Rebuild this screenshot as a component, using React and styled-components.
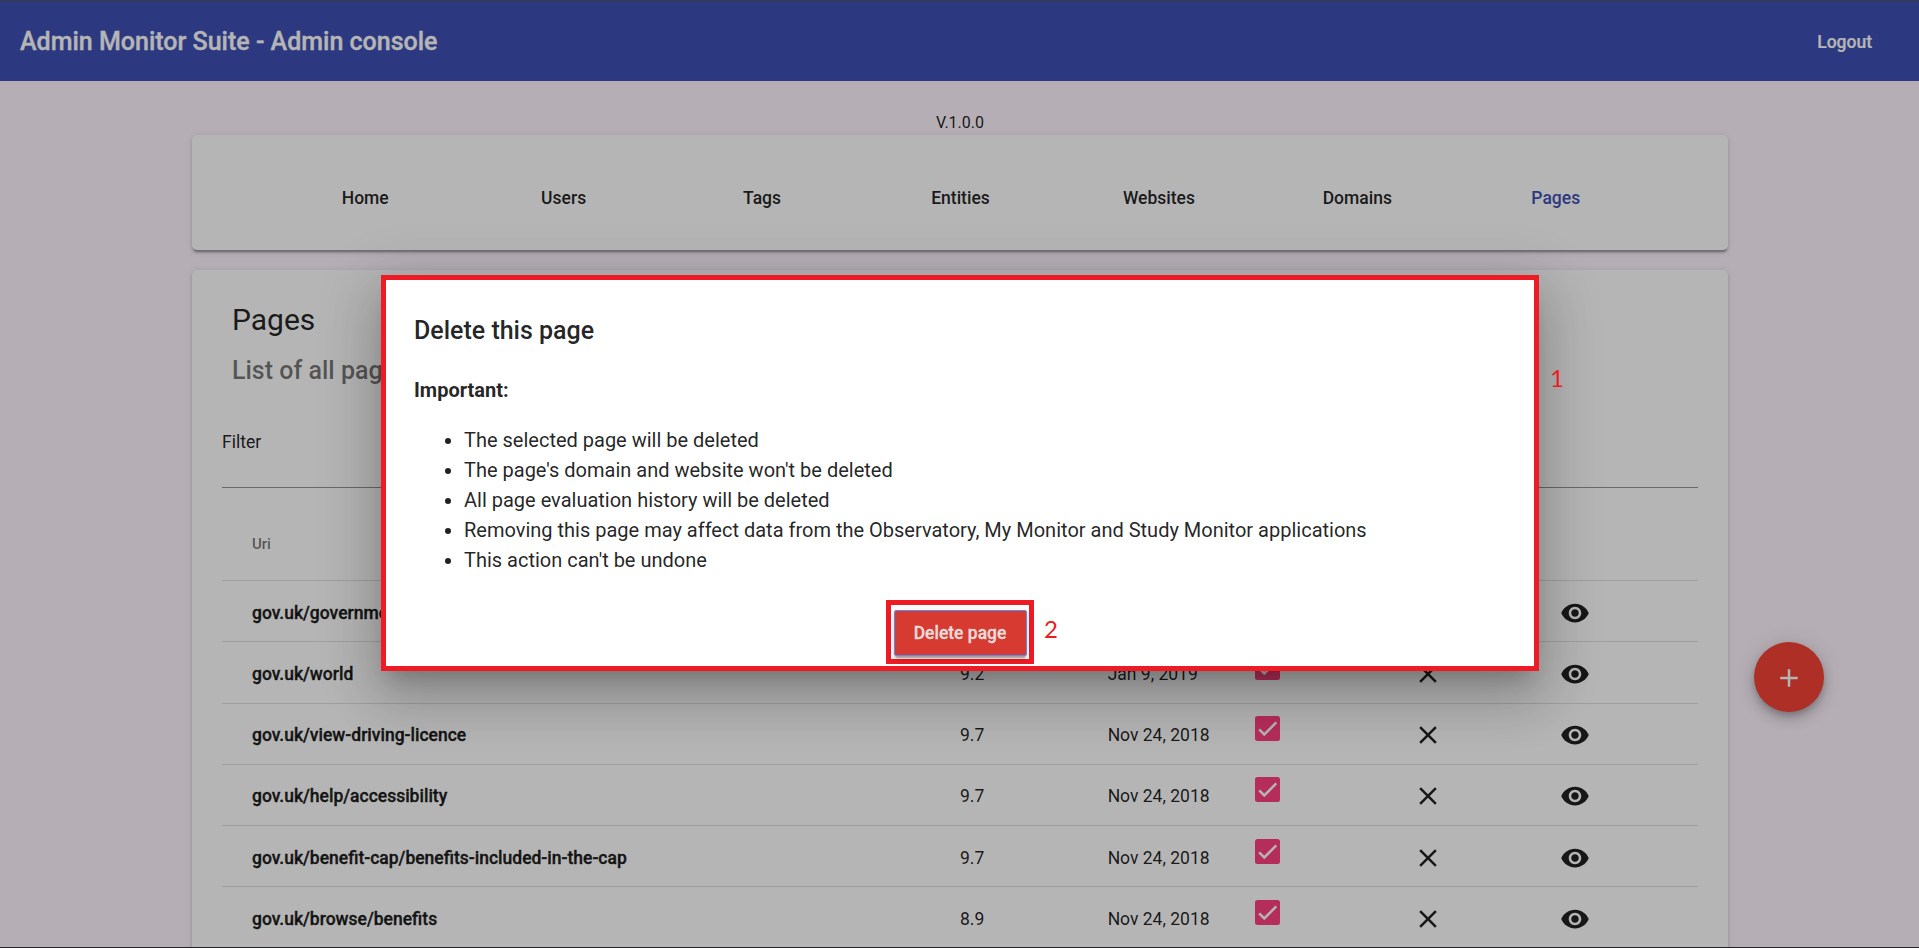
import React from "react";
import styled, { createGlobalStyle } from "styled-components";

const GlobalStyle = createGlobalStyle`
  * { box-sizing: border-box; }
  html, body { margin: 0; height: 948px; overflow: hidden; }
  body { font-family: Roboto, "Liberation Sans", sans-serif; color: rgba(0, 0, 0, 0.87); }
`;

const Screen = styled.div`
  position: relative;
  width: 1919px;
  height: 948px;
  overflow: hidden;
  background: #fff5ff;
`;

const TopBar = styled.header`
  display: flex;
  align-items: center;
  justify-content: space-between;
  height: 81px;
  padding: 3px 47px 0 20px;
  background: #3f51b5;
  color: #fff;
`;

const Brand = styled.h1`
  margin: 0;
  font-size: 25px;
  font-weight: 500;
  line-height: 40px;
  -webkit-text-stroke: 0.3px currentColor;
`;

const Logout = styled.a`
  font-size: 17.5px;
  font-weight: 500;
  -webkit-text-stroke: 0.2px currentColor;
`;

const Content = styled.main`
  width: 1536px;
  margin-left: 192px;
`;

const Version = styled.div`
  height: 54px;
  padding-top: 32px;
  text-align: center;
  font-size: 16px;
  line-height: 20px;
`;

const Card = styled.section`
  border-radius: 5px;
  background: #fff;
  box-shadow: 0 3.75px 1.25px -2.5px rgba(0, 0, 0, 0.2),
    0 2.5px 2.5px 0 rgba(0, 0, 0, 0.14), 0 1.25px 6.25px 0 rgba(0, 0, 0, 0.12);
`;

const NavCard = styled(Card)`
  height: 115px;
  margin-bottom: 20px;
  padding: 10px 73px 0 74px;
  display: flex;
  align-items: center;
`;

const NavLink = styled.a`
  flex: 1;
  text-align: center;
  font-size: 17.5px;
  font-weight: 500;
  color: ${(p) => (p.$active ? "#3f51b5" : "rgba(0, 0, 0, 0.87)")};
`;

const PagesCard = styled(Card)`
  height: 720px;
  padding: 30px;
`;

const CardTitle = styled.h2`
  margin: 0;
  padding-left: 10px;
  font-size: 30px;
  font-weight: 400;
  line-height: 40px;
`;

const CardSubtitle = styled.h3`
  margin: 11px 0 0;
  padding-left: 10px;
  font-size: 25px;
  font-weight: 500;
  line-height: 40px;
  color: rgba(0, 0, 0, 0.54);
`;

const FilterField = styled.div`
  height: 97px;
  padding-top: 41px;
  border-bottom: 1px solid rgba(0, 0, 0, 0.42);
  font-size: 17.5px;
  line-height: 20px;
`;

const Row = styled.div`
  display: grid;
  grid-template-columns: 1fr repeat(5, 147.6px);
  align-items: center;
  height: 61.2px;
  padding-left: 30px;
  border-bottom: 1px solid rgba(0, 0, 0, 0.12);
  font-size: 17.5px;
`;

const HeadRow = styled(Row)`
  height: 93.2px;
  padding-top: 20px;
  font-size: 15px;
  font-weight: 500;
  color: rgba(0, 0, 0, 0.54);
`;

const Cell = styled.span`
  padding-top: 3px;
`;

const Uri = styled(Cell)`
  font-weight: 500;
  -webkit-text-stroke: 0.4px currentColor;
`;

const Checkbox = styled.span`
  display: flex;
  width: 25px;
  height: 25px;
  margin-bottom: 10px;
  border-radius: 2.5px;
  background: #ff4081;
`;

const IconCell = styled.span`
  display: flex;
  justify-content: center;
  width: 50px;
  padding-top: 3px;
`;

const Fab = styled.button`
  position: absolute;
  left: 1754px;
  top: 642px;
  display: flex;
  align-items: center;
  justify-content: center;
  width: 70px;
  height: 70px;
  padding: 2px 0 0;
  border: 0;
  border-radius: 50%;
  background: #f44336;
  color: #fff;
  box-shadow: 0 3.75px 6.25px -1.25px rgba(0, 0, 0, 0.2),
    0 7.5px 12.5px 0 rgba(0, 0, 0, 0.14), 0 1.25px 22.5px 0 rgba(0, 0, 0, 0.12);
`;

const Backdrop = styled.div`
  position: absolute;
  inset: 0;
  background: rgba(0, 0, 0, 0.29);
`;

const Dialog = styled.div`
  position: absolute;
  left: 381px;
  top: 275px;
  width: 1158px;
  height: 396px;
  padding: 31px 28px 0;
  border: 5px solid #ee1b24;
  background: #fff;
  box-shadow: 0 13.75px 18.75px -8.75px rgba(0, 0, 0, 0.2),
    0 30px 47.5px 3.75px rgba(0, 0, 0, 0.14), 0 11.25px 57.5px 10px rgba(0, 0, 0, 0.12);
`;

const DialogTitle = styled.h2`
  margin: 0 0 24px;
  font-size: 25px;
  font-weight: 500;
  line-height: 40px;
`;

const DialogBody = styled.div`
  font-size: 20px;
  line-height: 30px;
`;

const Notes = styled.ul`
  margin: 20px 0 25px;
  padding-left: 50px;
`;

const Actions = styled.div`
  display: flex;
  justify-content: center;
`;

const Highlight = styled.div`
  display: flex;
  justify-content: center;
  width: 148px;
  height: 64px;
  padding-top: 5px;
  border: 5px solid #ee1b24;
`;

const DeleteButton = styled.button`
  width: 133px;
  height: 46px;
  padding: 0;
  border: 0;
  border-radius: 3px;
  background: #d63a30;
  color: rgba(235, 228, 228, 0.95);
  font: 500 17.5px Roboto, "Liberation Sans", sans-serif;
  -webkit-text-stroke: 0.3px currentColor;
  outline: 1px solid #5b8def;
  outline-offset: -1px;
  box-shadow: 0 3.75px 1.25px -2.5px rgba(0, 0, 0, 0.2),
    0 2.5px 2.5px 0 rgba(0, 0, 0, 0.14), 0 1.25px 6.25px 0 rgba(0, 0, 0, 0.12);
`;

const StepLabel = styled.span`
  position: absolute;
  left: ${(p) => p.$x}px;
  top: ${(p) => p.$y}px;
  font-family: Lato, sans-serif;
  font-size: 24px;
  line-height: 30px;
  color: #ee1b24;
`;

const ScreenEdge = styled.div`
  position: absolute;
  left: 0;
  right: 0;
  height: 1px;
  ${(p) => p.$side}: 0;
  background: ${(p) => (p.$side === "top" ? "#3a3a3b" : "#242526")};
`;

const ICONS = {
  close:
    "M19 6.41L17.59 5 12 10.59 6.41 5 5 6.41 10.59 12 5 17.59 6.41 19 12 13.41 17.59 19 19 17.59 13.41 12z",
  eye: "M12 4.5C7 4.5 2.73 7.61 1 12c1.73 4.39 6 7.5 11 7.5s9.27-3.11 11-7.5c-1.73-4.39-6-7.5-11-7.5zM12 17c-2.76 0-5-2.24-5-5s2.24-5 5-5 5 2.24 5 5-2.24 5-5 5zm0-8c-1.66 0-3 1.34-3 3s1.34 3 3 3 3-1.34 3-3-1.34-3-3-3z",
  add: "M19 13h-6v6h-2v-6H5v-2h6V5h2v6h6v2z",
};

const Icon = ({ name }) => (
  <svg width="30" height="30" viewBox="0 0 24 24" fill="currentColor">
    <path d={ICONS[name]} />
  </svg>
);

const CheckMark = () => (
  <svg width="25" height="25" viewBox="0 0 24 24" fill="none" stroke="#fff" strokeWidth="2.4">
    <path d="M4,12.9 8.9,17.7 20.4,6.2" />
  </svg>
);

const NAV = ["Home", "Users", "Tags", "Entities", "Websites", "Domains", "Pages"];

const PAGES = [
  ["gov.uk/government", "9.2", "Jan 9, 2019"],
  ["gov.uk/world", "9.2", "Jan 9, 2019"],
  ["gov.uk/view-driving-licence", "9.7", "Nov 24, 2018"],
  ["gov.uk/help/accessibility", "9.7", "Nov 24, 2018"],
  ["gov.uk/benefit-cap/benefits-included-in-the-cap", "9.7", "Nov 24, 2018"],
  ["gov.uk/browse/benefits", "8.9", "Nov 24, 2018"],
];

const NOTES = [
  "The selected page will be deleted",
  "The page's domain and website won't be deleted",
  "All page evaluation history will be deleted",
  "Removing this page may affect data from the Observatory, My Monitor and Study Monitor applications",
  "This action can't be undone",
];

export default function App() {
  return (
    <Screen>
      <GlobalStyle />
      <TopBar>
        <Brand>Admin Monitor Suite - Admin console</Brand>
        <Logout>Logout</Logout>
      </TopBar>
      <Content>
        <Version>V.1.0.0</Version>
        <NavCard as="nav">
          {NAV.map((label) => (
            <NavLink key={label} $active={label === "Pages"}>
              {label}
            </NavLink>
          ))}
        </NavCard>
        <PagesCard>
          <CardTitle>Pages</CardTitle>
          <CardSubtitle>List of all pages</CardSubtitle>
          <FilterField>Filter</FilterField>
          <HeadRow>
            <span>Uri</span>
          </HeadRow>
          {PAGES.map(([uri, score, date]) => (
            <Row key={uri}>
              <Uri>{uri}</Uri>
              <Cell>{score}</Cell>
              <Cell>{date}</Cell>
              <Checkbox>
                <CheckMark />
              </Checkbox>
              <IconCell>
                <Icon name="close" />
              </IconCell>
              <IconCell>
                <Icon name="eye" />
              </IconCell>
            </Row>
          ))}
        </PagesCard>
      </Content>
      <Fab>
        <Icon name="add" />
      </Fab>
      <Backdrop />
      <Dialog role="dialog">
        <DialogTitle>Delete this page</DialogTitle>
        <DialogBody>
          <b>Important:</b>
          <Notes>
            {NOTES.map((note) => (
              <li key={note}>{note}</li>
            ))}
          </Notes>
        </DialogBody>
        <Actions>
          <Highlight>
            <DeleteButton>Delete page</DeleteButton>
          </Highlight>
        </Actions>
      </Dialog>
      <StepLabel $x={1550} $y={363}>1</StepLabel>
      <StepLabel $x={1044} $y={614}>2</StepLabel>
      <ScreenEdge $side="top" />
      <ScreenEdge $side="bottom" />
    </Screen>
  );
}
